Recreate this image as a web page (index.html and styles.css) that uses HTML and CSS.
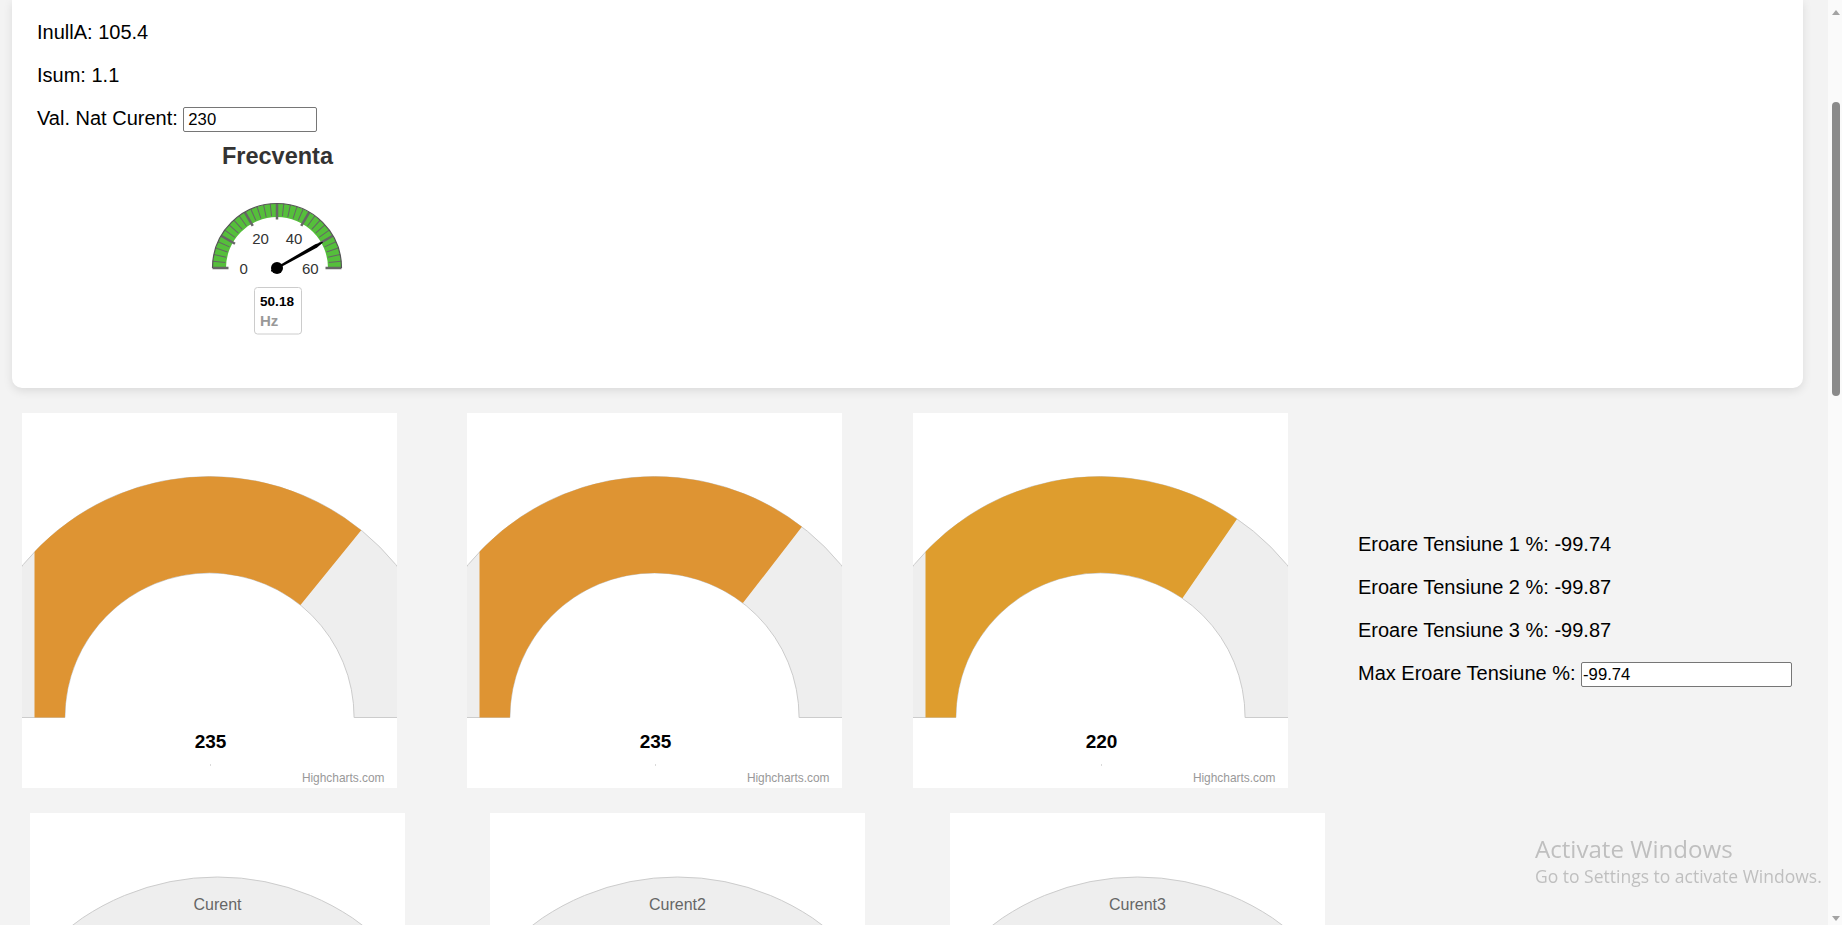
FILE: index.html
```html
<!DOCTYPE html>
<html lang="ro">
<head>
<meta charset="utf-8">
<title>Monitorizare</title>
<link rel="stylesheet" href="styles.css">
</head>
<body>
<div class="page">
  <section class="card">
    <p>InullA: 105.4</p>
    <p>Isum: 1.1</p>
    <div class="field">Val. Nat Curent: <input class="inp inp-nat" type="text" value="230"></div>
    <svg class="freq" width="480" height="231" viewBox="0 0 480 231">
      <text class="ftitle" x="240.5" y="32">Frecventa</text>
      <g transform="translate(240 136)">
        <path class="band" d="M -64.5 0 A 64.5 64.5 0 0 1 64.5 0 L 51 0 A 51 51 0 0 0 -51 0 Z"/>
        <g class="minor">
          <line x1="-64.5" y1="0" x2="-52" y2="0" transform="rotate(6)"/>
          <line x1="-64.5" y1="0" x2="-52" y2="0" transform="rotate(12)"/>
          <line x1="-64.5" y1="0" x2="-52" y2="0" transform="rotate(18)"/>
          <line x1="-64.5" y1="0" x2="-52" y2="0" transform="rotate(24)"/>
          <line x1="-64.5" y1="0" x2="-52" y2="0" transform="rotate(36)"/>
          <line x1="-64.5" y1="0" x2="-52" y2="0" transform="rotate(42)"/>
          <line x1="-64.5" y1="0" x2="-52" y2="0" transform="rotate(48)"/>
          <line x1="-64.5" y1="0" x2="-52" y2="0" transform="rotate(54)"/>
          <line x1="-64.5" y1="0" x2="-52" y2="0" transform="rotate(66)"/>
          <line x1="-64.5" y1="0" x2="-52" y2="0" transform="rotate(72)"/>
          <line x1="-64.5" y1="0" x2="-52" y2="0" transform="rotate(78)"/>
          <line x1="-64.5" y1="0" x2="-52" y2="0" transform="rotate(84)"/>
          <line x1="-64.5" y1="0" x2="-52" y2="0" transform="rotate(96)"/>
          <line x1="-64.5" y1="0" x2="-52" y2="0" transform="rotate(102)"/>
          <line x1="-64.5" y1="0" x2="-52" y2="0" transform="rotate(108)"/>
          <line x1="-64.5" y1="0" x2="-52" y2="0" transform="rotate(114)"/>
          <line x1="-64.5" y1="0" x2="-52" y2="0" transform="rotate(126)"/>
          <line x1="-64.5" y1="0" x2="-52" y2="0" transform="rotate(132)"/>
          <line x1="-64.5" y1="0" x2="-52" y2="0" transform="rotate(138)"/>
          <line x1="-64.5" y1="0" x2="-52" y2="0" transform="rotate(144)"/>
          <line x1="-64.5" y1="0" x2="-52" y2="0" transform="rotate(156)"/>
          <line x1="-64.5" y1="0" x2="-52" y2="0" transform="rotate(162)"/>
          <line x1="-64.5" y1="0" x2="-52" y2="0" transform="rotate(168)"/>
          <line x1="-64.5" y1="0" x2="-52" y2="0" transform="rotate(174)"/>
        </g>
        <g class="major">
          <line x1="-64.5" y1="0" x2="-48.5" y2="0" transform="rotate(0)"/>
          <line x1="-64.5" y1="0" x2="-48.5" y2="0" transform="rotate(30)"/>
          <line x1="-64.5" y1="0" x2="-48.5" y2="0" transform="rotate(60)"/>
          <line x1="-64.5" y1="0" x2="-48.5" y2="0" transform="rotate(90)"/>
          <line x1="-64.5" y1="0" x2="-48.5" y2="0" transform="rotate(120)"/>
          <line x1="-64.5" y1="0" x2="-48.5" y2="0" transform="rotate(150)"/>
          <line x1="-64.5" y1="0" x2="-48.5" y2="0" transform="rotate(180)"/>
        </g>
        <path class="rim" d="M -64.5 0 A 64.5 64.5 0 0 1 64.5 0"/>
        <text class="lbl" x="-33.4" y="5.7">0</text>
        <text class="lbl" x="-16.4" y="-24">20</text>
        <text class="lbl" x="17.1" y="-24">40</text>
        <text class="lbl" x="33.3" y="5.7">60</text>
        <g transform="rotate(150.54)">
          <path class="needle" d="M 6.5 -1 L -45 -1.9 L -52.5 -0.5 L -52.5 0.5 L -45 1.9 L 6.5 1 Z"/>
        </g>
        <circle class="pivot" cx="0" cy="0" r="6"/>
      </g>
      <rect class="dlbox" x="217.5" y="155.5" width="47" height="46.5" rx="3" ry="3"/>
      <text class="dlval" x="223" y="174">50.18</text>
      <text class="dlunit" x="223" y="194">Hz</text>
    </svg>
  </section>

  <div class="row row-volt">
    <div class="gauge-card">
      <svg width="375" height="375" viewBox="0 0 375 375">
        <defs><clipPath id="pa1"><rect x="12.5" y="12.5" width="350" height="350"/></clipPath></defs>
        <path class="pane-bg" d="M -53.5 304.5 A 241 241 0 0 1 428.5 304.5 L 332.1 304.5 A 144.6 144.6 0 0 0 42.9 304.5 Z"/>
        <path class="fill-a" clip-path="url(#pa1)" d="M -53.5 304.5 A 241 241 0 0 1 339.2 117.2 L 278.5 192.1 A 144.6 144.6 0 0 0 42.9 304.5 Z"/>
        <text class="val" x="188.5" y="335.3">235</text>
        <rect class="unit-dot" x="188" y="351.5" width="1" height="1"/>
        <text class="credit" x="362.5" y="368.7">Highcharts.com</text>
      </svg>
    </div>
    <div class="gauge-card">
      <svg width="375" height="375" viewBox="0 0 375 375">
        <defs><clipPath id="pa2"><rect x="12.5" y="12.5" width="350" height="350"/></clipPath></defs>
        <path class="pane-bg" d="M -53.5 304.5 A 241 241 0 0 1 428.5 304.5 L 332.1 304.5 A 144.6 144.6 0 0 0 42.9 304.5 Z"/>
        <path class="fill-a" clip-path="url(#pa2)" d="M -53.5 304.5 A 241 241 0 0 1 334.9 113.8 L 275.9 190.1 A 144.6 144.6 0 0 0 42.9 304.5 Z"/>
        <text class="val" x="188.5" y="335.3">235</text>
        <rect class="unit-dot" x="188" y="351.5" width="1" height="1"/>
        <text class="credit" x="362.5" y="368.7">Highcharts.com</text>
      </svg>
    </div>
    <div class="gauge-card gauge-shift">
      <svg width="375" height="375" viewBox="0 0 375 375">
        <defs><clipPath id="pa3"><rect x="12.5" y="12.5" width="350" height="350"/></clipPath></defs>
        <path class="pane-bg" d="M -53.5 304.5 A 241 241 0 0 1 428.5 304.5 L 332.1 304.5 A 144.6 144.6 0 0 0 42.9 304.5 Z"/>
        <path class="fill-b" clip-path="url(#pa3)" d="M -53.5 304.5 A 241 241 0 0 1 324 105.9 L 269.4 185.3 A 144.6 144.6 0 0 0 42.9 304.5 Z"/>
        <text class="val" x="188.5" y="335.3">220</text>
        <rect class="unit-dot" x="188" y="351.5" width="1" height="1"/>
        <text class="credit" x="362.5" y="368.7">Highcharts.com</text>
      </svg>
    </div>
    <div class="errors">
      <p>Eroare Tensiune 1 %: -99.74</p>
      <p>Eroare Tensiune 2 %: -99.87</p>
      <p>Eroare Tensiune 3 %: -99.87</p>
      <p>Max Eroare Tensiune %: <input class="inp inp-max" type="text" value="-99.74"></p>
    </div>
  </div>

  <div class="row row-cur">
    <div class="gauge-card">
      <svg width="375" height="375" viewBox="0 0 375 375">
        <circle class="pane-bg" cx="187.5" cy="307" r="243"/>
        <text class="ctitle" x="187.5" y="97">Curent</text>
      </svg>
    </div>
    <div class="gauge-card">
      <svg width="375" height="375" viewBox="0 0 375 375">
        <circle class="pane-bg" cx="187.5" cy="307" r="243"/>
        <text class="ctitle" x="187.5" y="97">Curent2</text>
      </svg>
    </div>
    <div class="gauge-card">
      <svg width="375" height="375" viewBox="0 0 375 375">
        <circle class="pane-bg" cx="187.5" cy="307" r="243"/>
        <text class="ctitle" x="187.5" y="97">Curent3</text>
      </svg>
    </div>
  </div>
</div>

<div class="scrollbar">
  <div class="arrow-up"></div>
  <div class="thumb"></div>
  <div class="arrow-down"></div>
</div>

<div class="watermark">
  <div class="wm-title">Activate Windows</div>
  <div class="wm-sub">Go to Settings to activate Windows.</div>
</div>
</body>
</html>
```

FILE: styles.css
```css
html, body {
  margin: 0;
  padding: 0;
}

body {
  display: flex;
  height: 925px;
  overflow: hidden;
  background: #f3f3f3;
  font-family: "Liberation Sans", Arial, sans-serif;
  color: #000;
}

.page {
  flex: 1 1 auto;
  min-width: 0;
  overflow: hidden;
}

.card {
  margin-left: 12px;
  width: 1791px;
  box-sizing: border-box;
  padding: 1px 25px 25px;
  background: #fff;
  border-radius: 0 0 10px 10px;
  box-shadow: 0 3px 10px rgba(0, 0, 0, 0.1);
}

.card p,
.errors p {
  margin: 20px 0;
  font-size: 20px;
  line-height: 23px;
  white-space: nowrap;
}

.field {
  font-size: 20px;
  line-height: 23px;
}

.inp {
  box-sizing: border-box;
  height: 25px;
  vertical-align: top;
  margin: 0;
  padding: 1px 3px;
  border: 1px solid #767676;
  border-radius: 2px;
  background: #fff;
  color: #000;
  font-family: "Liberation Sans", Arial, sans-serif;
  font-size: 16.67px;
}

.inp-nat {
  width: 134px;
  padding-left: 4px;
}

.inp-max {
  width: 211px;
  padding-left: 1px;
}

.freq {
  display: block;
}

.ftitle {
  font-family: "Liberation Sans", Arial, sans-serif;
  font-size: 23.5px;
  font-weight: bold;
  fill: #333333;
  text-anchor: middle;
}

.band {
  fill: #55bf3b;
}

.minor line {
  stroke: #666666;
  stroke-width: 1;
}

.major line {
  stroke: #666666;
  stroke-width: 2.5;
}

.rim {
  fill: none;
  stroke: #555555;
  stroke-width: 1.2;
}

.lbl {
  font-family: "Liberation Sans", Arial, sans-serif;
  font-size: 15px;
  fill: #333333;
  text-anchor: middle;
}

.needle {
  fill: #000;
}

.pivot {
  fill: #000;
}

.dlbox {
  fill: #fff;
  stroke: #cccccc;
  stroke-width: 1;
}

.dlval {
  font-family: "Liberation Sans", Arial, sans-serif;
  font-size: 13.6px;
  font-weight: bold;
  fill: #000;
}

.dlunit {
  font-family: "Liberation Sans", Arial, sans-serif;
  font-size: 15px;
  font-weight: bold;
  fill: #999999;
}

.row {
  display: flex;
  align-items: flex-start;
  margin-top: 25px;
}

.row-volt {
  padding-left: 22px;
  gap: 70px;
}

.row-cur {
  padding-left: 30px;
  gap: 85px;
}

.gauge-card {
  flex: none;
  width: 375px;
  height: 375px;
  background: #fff;
}

.gauge-shift {
  margin-left: 1px;
}

.gauge-card svg {
  display: block;
}

.pane-bg {
  fill: #eeeeee;
  stroke: #cccccc;
  stroke-width: 1;
}

.fill-a {
  fill: #de9433;
}

.fill-b {
  fill: #de9d2e;
}

.val {
  font-family: "Liberation Sans", Arial, sans-serif;
  font-size: 19px;
  font-weight: bold;
  fill: #000;
  text-anchor: middle;
}

.unit-dot {
  fill: #b5b5b5;
}

.credit {
  font-family: "Liberation Sans", Arial, sans-serif;
  font-size: 11.9px;
  fill: #999999;
  text-anchor: end;
}

.ctitle {
  font-family: "Liberation Sans", Arial, sans-serif;
  font-size: 16px;
  fill: #666666;
  text-anchor: middle;
}

.errors {
  flex: none;
  padding-top: 100px;
}

.scrollbar {
  flex: 0 0 14px;
  display: flex;
  flex-direction: column;
  align-items: flex-start;
  box-sizing: border-box;
  padding-left: 4px;
  background: #fafafa;
}

.arrow-up {
  margin-top: 10px;
  width: 0;
  height: 0;
  border-left: 4px solid transparent;
  border-right: 4px solid transparent;
  border-bottom: 5px solid #a3a3a3;
}

.thumb {
  margin-top: 87px;
  width: 8px;
  height: 294px;
  border-radius: 4px;
  background: #8a8a8a;
}

.arrow-down {
  margin-top: auto;
  margin-bottom: 4px;
  width: 0;
  height: 0;
  border-left: 4px solid transparent;
  border-right: 4px solid transparent;
  border-top: 5px solid #a3a3a3;
}

.watermark {
  position: fixed;
  left: 1535px;
  top: 834px;
  color: #bfbfbf;
  font-family: "Open Sans", "Noto Sans", sans-serif;
  white-space: nowrap;
  pointer-events: none;
}

.wm-title {
  font-size: 24.1px;
  line-height: 29px;
}

.wm-sub {
  margin-top: 2px;
  font-size: 17.5px;
  line-height: 22px;
}
```
